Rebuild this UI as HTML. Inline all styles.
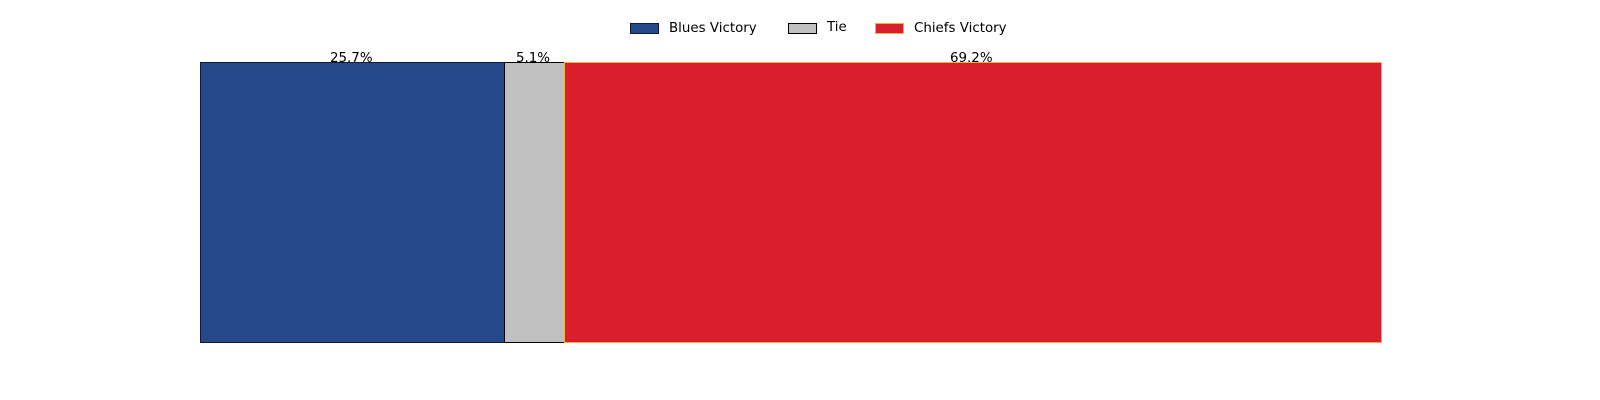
<!DOCTYPE html>
<html><head><style>
body{margin:0;width:1600px;height:400px;background:#fff;position:relative;font-family:"DejaVu Sans","Liberation Sans",sans-serif;font-size:13.4px;color:#000;overflow:hidden}
div{position:absolute;box-sizing:border-box}
.t{line-height:1;white-space:nowrap}
</style></head><body>
<div style="left:200px;top:62px;width:305px;height:281px;background:#25488b;border:1px solid #0d1a3a"></div>
<div style="left:504px;top:62px;width:61px;height:281px;background:#c0c0c0;border:1px solid #000"></div>
<div style="left:564px;top:62px;width:818px;height:281px;background:#d71e2a;border:1px solid #f0b040"></div>
<div class="t" style="left:330px;top:52px">25.7%</div>
<div class="t" style="left:516px;top:52px">5.1%</div>
<div class="t" style="left:950px;top:52px">69.2%</div>
<div style="left:630px;top:23px;width:29px;height:11px;background:#25488b;border:1px solid #0d1a3a"></div>
<div class="t" style="left:669px;top:22px">Blues Victory</div>
<div style="left:788px;top:23px;width:29px;height:11px;background:#c0c0c0;border:1px solid #000"></div>
<div class="t" style="left:827px;top:21px">Tie</div>
<div style="left:875px;top:23px;width:29px;height:11px;background:#d71e2a;border:1px solid #f0b040"></div>
<div class="t" style="left:914px;top:22px">Chiefs Victory</div>
</body></html>
